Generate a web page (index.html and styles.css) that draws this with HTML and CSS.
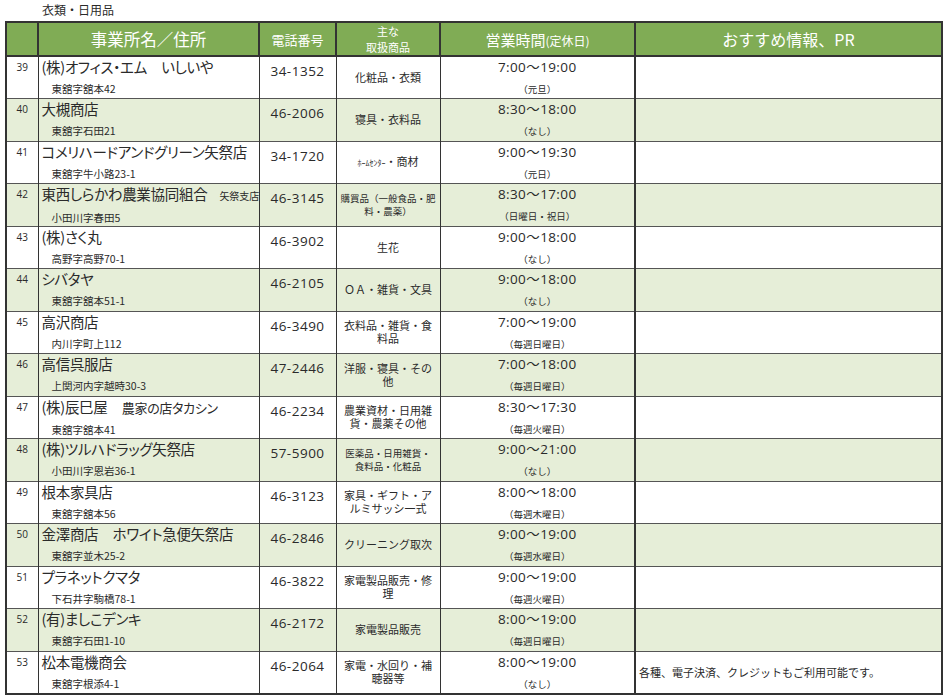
FILE: index.html
```html
<!DOCTYPE html>
<html lang="ja">
<head>
<meta charset="utf-8">
<link rel="stylesheet" href="styles.css">
</head>
<body>
<div class="page">
  <div class="caption">衣類・日用品</div>
  <table class="list">
    <colgroup>
      <col class="c-no"><col class="c-name"><col class="c-tel"><col class="c-goods"><col class="c-hours"><col class="c-pr">
    </colgroup>
    <thead>
      <tr>
        <th></th>
        <th class="h-name">事業所名／住所</th>
        <th class="h-tel">電話番号</th>
        <th class="h-goods">主な<br>取扱商品</th>
        <th class="h-hours">営業時間<span class="small">(定休日)</span></th>
        <th class="h-pr">おすすめ情報、PR</th>
      </tr>
    </thead>
    <tbody>
      <tr><td class="no">39</td><td class="name"><div class="n">(株)オフィス・エム　いしいや</div><div class="addr">東舘字舘本42</div></td><td class="tel">34-1352</td><td class="goods">化粧品・衣類</td><td class="hours"><div class="t">7:00～19:00</div><div class="hol">（元旦）</div></td><td class="pr"></td></tr>
      <tr class="alt"><td class="no">40</td><td class="name"><div class="n">大槻商店</div><div class="addr">東舘字石田21</div></td><td class="tel">46-2006</td><td class="goods">寝具・衣料品</td><td class="hours"><div class="t">8:30～18:00</div><div class="hol">（なし）</div></td><td class="pr"></td></tr>
      <tr><td class="no">41</td><td class="name"><div class="n">コメリハードアンドグリーン矢祭店</div><div class="addr">東舘字牛小路23-1</div></td><td class="tel">34-1720</td><td class="goods"><span class="tiny">ﾎｰﾑｾﾝﾀｰ</span>・商材</td><td class="hours"><div class="t">9:00～19:30</div><div class="hol">（元日）</div></td><td class="pr"></td></tr>
      <tr class="alt"><td class="no">42</td><td class="name"><div class="n">東西しらかわ農業協同組合<span class="sub">矢祭支店</span></div><div class="addr">小田川字春田5</div></td><td class="tel">46-3145</td><td class="goods sm">購買品（一般食品・肥料・農薬）</td><td class="hours"><div class="t">8:30～17:00</div><div class="hol">（日曜日・祝日）</div></td><td class="pr"></td></tr>
      <tr><td class="no">43</td><td class="name"><div class="n">(株)さく丸</div><div class="addr">高野字高野70-1</div></td><td class="tel">46-3902</td><td class="goods">生花</td><td class="hours"><div class="t">9:00～18:00</div><div class="hol">（なし）</div></td><td class="pr"></td></tr>
      <tr class="alt"><td class="no">44</td><td class="name"><div class="n">シバタヤ</div><div class="addr">東舘字舘本51-1</div></td><td class="tel">46-2105</td><td class="goods">ＯＡ・雑貨・文具</td><td class="hours"><div class="t">9:00～18:00</div><div class="hol">（なし）</div></td><td class="pr"></td></tr>
      <tr><td class="no">45</td><td class="name"><div class="n">高沢商店</div><div class="addr">内川字町上112</div></td><td class="tel">46-3490</td><td class="goods">衣料品・雑貨・食料品</td><td class="hours"><div class="t">7:00～19:00</div><div class="hol">（毎週日曜日）</div></td><td class="pr"></td></tr>
      <tr class="alt"><td class="no">46</td><td class="name"><div class="n">高信呉服店</div><div class="addr">上関河内字越時30-3</div></td><td class="tel">47-2446</td><td class="goods">洋服・寝具・その他</td><td class="hours"><div class="t">7:00～18:00</div><div class="hol">（毎週日曜日）</div></td><td class="pr"></td></tr>
      <tr><td class="no">47</td><td class="name"><div class="n">(株)辰巳屋　<span class="mid">農家の店タカシン</span></div><div class="addr">東舘字舘本41</div></td><td class="tel">46-2234</td><td class="goods">農業資材・日用雑貨・農薬その他</td><td class="hours"><div class="t">8:30～17:30</div><div class="hol">（毎週火曜日）</div></td><td class="pr"></td></tr>
      <tr class="alt"><td class="no">48</td><td class="name"><div class="n">(株)ツルハドラッグ矢祭店</div><div class="addr">小田川字恩岩36-1</div></td><td class="tel">57-5900</td><td class="goods sm">医薬品・日用雑貨・<br>食料品・化粧品</td><td class="hours"><div class="t">9:00～21:00</div><div class="hol">（なし）</div></td><td class="pr"></td></tr>
      <tr><td class="no">49</td><td class="name"><div class="n">根本家具店</div><div class="addr">東舘字舘本56</div></td><td class="tel">46-3123</td><td class="goods">家具・ギフト・アルミサッシ一式</td><td class="hours"><div class="t">8:00～18:00</div><div class="hol">（毎週木曜日）</div></td><td class="pr"></td></tr>
      <tr class="alt"><td class="no">50</td><td class="name"><div class="n">金澤商店　ホワイト急便矢祭店</div><div class="addr">東舘字並木25-2</div></td><td class="tel">46-2846</td><td class="goods">クリーニング取次</td><td class="hours"><div class="t">9:00～19:00</div><div class="hol">（毎週水曜日）</div></td><td class="pr"></td></tr>
      <tr><td class="no">51</td><td class="name"><div class="n">プラネットクマタ</div><div class="addr">下石井字駒橋78-1</div></td><td class="tel">46-3822</td><td class="goods">家電製品販売・修理</td><td class="hours"><div class="t">9:00～19:00</div><div class="hol">（毎週火曜日）</div></td><td class="pr"></td></tr>
      <tr class="alt"><td class="no">52</td><td class="name"><div class="n">(有)ましこデンキ</div><div class="addr">東舘字石田1-10</div></td><td class="tel">46-2172</td><td class="goods">家電製品販売</td><td class="hours"><div class="t">8:00～19:00</div><div class="hol">（毎週日曜日）</div></td><td class="pr"></td></tr>
      <tr><td class="no">53</td><td class="name"><div class="n">松本電機商会</div><div class="addr">東舘字根添4-1</div></td><td class="tel">46-2064</td><td class="goods">家電・水回り・補聴器等</td><td class="hours"><div class="t">8:00～19:00</div><div class="hol">（なし）</div></td><td class="pr prtext">各種、電子決済、クレジットもご利用可能です。</td></tr>
    </tbody>
  </table>
</div>
</body>
</html>
```

FILE: styles.css
```css
html, body {
  margin: 0;
  padding: 0;
  background: #ffffff;
}
body {
  font-family: "Noto Sans CJK JP", "Noto Sans", sans-serif;
  color: #2a2a2a;
}
.page {
  padding: 2px 0 0 5px;
  width: 940px;
}
.caption {
  font-size: 12px;
  line-height: 16px;
  height: 19px;
  padding-left: 37px;
}
.list {
  border-collapse: collapse;
  table-layout: fixed;
  width: 938px;
  border: 2px solid #333;
}
.c-no { width: 32px; }
.c-name { width: 221px; }
.c-tel { width: 77px; }
.c-goods { width: 104px; }
.c-hours { width: 195px; }
.c-pr { width: auto; }

thead tr { height: 33px; }
th {
  background: #80ac55;
  color: #fff;
  font-weight: normal;
  padding: 0;
  border-left: 2px solid #333;
  border-right: 2px solid #333;
  border-bottom: 2px solid #333;
  text-align: center;
  vertical-align: middle;
  line-height: 1;
}
.h-name { font-size: 16.5px; }
.h-tel { font-size: 13px; }
.h-goods { font-size: 11px; line-height: 16px; }
.h-hours { font-size: 15px; }
.h-hours .small { font-size: 12px; }
.h-pr { font-size: 16px; }

tbody tr { height: 42.5px; }
td {
  padding: 0;
  border-left: 1px solid #333;
  border-right: 1px solid #333;
  border-top: 1px solid #555;
  vertical-align: top;
  line-height: 14px;
}
tr.alt td { background: #e6eed8; }
td.pr { border-left: 2px solid #333; }

td.no {
  font-family: "Open Sans", "Noto Sans CJK JP", sans-serif;
  font-size: 10px;
  text-align: center;
  padding-top: 4px;
  line-height: 12px;
}
td.name { padding-left: 3px; }
.name .n {
  font-size: 14.5px;
  line-height: 20px;
  white-space: nowrap;
  letter-spacing: -0.3px;
  font-feature-settings: "palt" 1;
}
.name .sub { font-size: 10px; letter-spacing: 0; margin-left: 12px; }
.name .mid { font-size: 13px; }
.name .addr {
  font-size: 10.5px;
  line-height: 14px;
  padding-left: 10px;
  margin-top: 5px;
}
td.tel {
  text-align: center;
  font-family: "Open Sans", "Noto Sans CJK JP", sans-serif;
  font-size: 13.5px;
  letter-spacing: 0.5px;
  padding-top: 6px;
  line-height: 16px;
}
td.goods {
  text-align: center;
  vertical-align: middle;
  font-size: 11px;
  line-height: 13px;
  padding: 0 6px;
}
td.goods.sm { font-size: 9.5px; line-height: 13px; padding: 0 4px; }
.tiny { font-size: 8px; }
td.hours {
  text-align: center;
}
.hours .t {
  font-family: "Open Sans", "Noto Sans CJK JP", sans-serif;
  font-size: 13.5px;
  letter-spacing: 0.4px;
  line-height: 18px;
  padding-top: 1px;
}
.hours .hol {
  font-size: 9.5px;
  line-height: 14px;
  margin-top: 6px;
}
td.prtext {
  vertical-align: middle;
  font-size: 11px;
  line-height: 14px;
  padding-left: 3px;
}
```
